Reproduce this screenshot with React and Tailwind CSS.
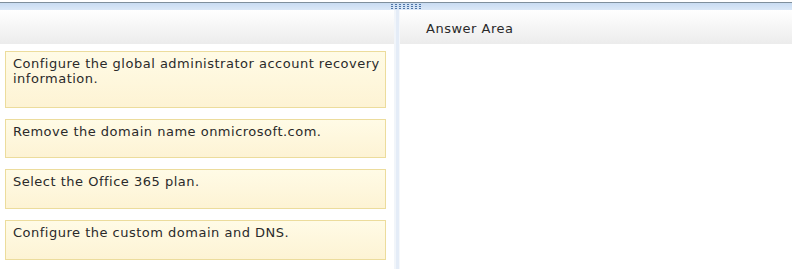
import React from "react";

const items = [
  { id: 1, text: "Configure the global administrator account recovery information.", h: "h-[57px]" },
  { id: 2, text: "Remove the domain name onmicrosoft.com.", h: "h-[39px]" },
  { id: 3, text: "Select the Office 365 plan.", h: "h-[40px]" },
  { id: 4, text: "Configure the custom domain and DNS.", h: "h-[40px]" },
];

const Grip = () => (
  <div className="flex gap-[2px]">
    {Array.from({ length: 8 }).map((_, i) => (
      <div key={i} className="flex flex-col gap-[1px]">
        <div className="w-[2px] h-[1px] bg-[#4f76a8]" />
        <div className="w-[2px] h-[1px] bg-[#4f76a8]" />
        <div className="w-[2px] h-[1px] bg-[#4f76a8]" />
      </div>
    ))}
  </div>
);

const App = () => {
  return (
    <div
      className="w-[792px] h-[269px] bg-white overflow-hidden flex flex-col"
      style={{ fontFamily: "Verdana, 'DejaVu Sans', sans-serif" }}
    >
      {/* top splitter bar */}
      <div className="h-[2px] bg-white" />
      <div className="h-[1px] bg-[#7f8f9c]" />
      <div className="h-[7px] bg-gradient-to-b from-[#c9dcf2] to-[#dbe8f7] flex items-center pl-[391px]">
        <Grip />
      </div>

      <div className="flex flex-1">
        {/* left column */}
        <div className="w-[394px] flex flex-col">
          <div className="h-[34px] bg-gradient-to-b from-white to-[#ececec]" />
          <div className="flex flex-col gap-[11px] pl-[5px] pr-[8px] pt-[7px]">
            {items.map((item) => (
              <div
                key={item.id}
                className={`${item.h} border border-[#ecdc9c] bg-gradient-to-b from-[#fffbe6] to-[#fdf3d4] pl-[7px] pr-[1px] pt-[4px] text-[13px] leading-[15px] tracking-[0.5px] text-[#2a2a2a]`}
              >
                {item.text}
              </div>
            ))}
          </div>
        </div>

        {/* divider */}
        <div className="w-[6px] flex">
          <div className="w-[2px] bg-[#f1f5fa]" />
          <div className="w-[3px] bg-[#e4ecf7]" />
          <div className="w-[1px] bg-[#f4f7fb]" />
        </div>

        {/* right column */}
        <div className="flex-1 flex flex-col">
          <div className="h-[34px] bg-gradient-to-b from-white to-[#ececec] flex items-center pt-[3px] pl-[26px] text-[13px] tracking-[0.5px] text-[#2a2a2a]">
            Answer Area
          </div>
        </div>
      </div>
    </div>
  );
};

export default App;
